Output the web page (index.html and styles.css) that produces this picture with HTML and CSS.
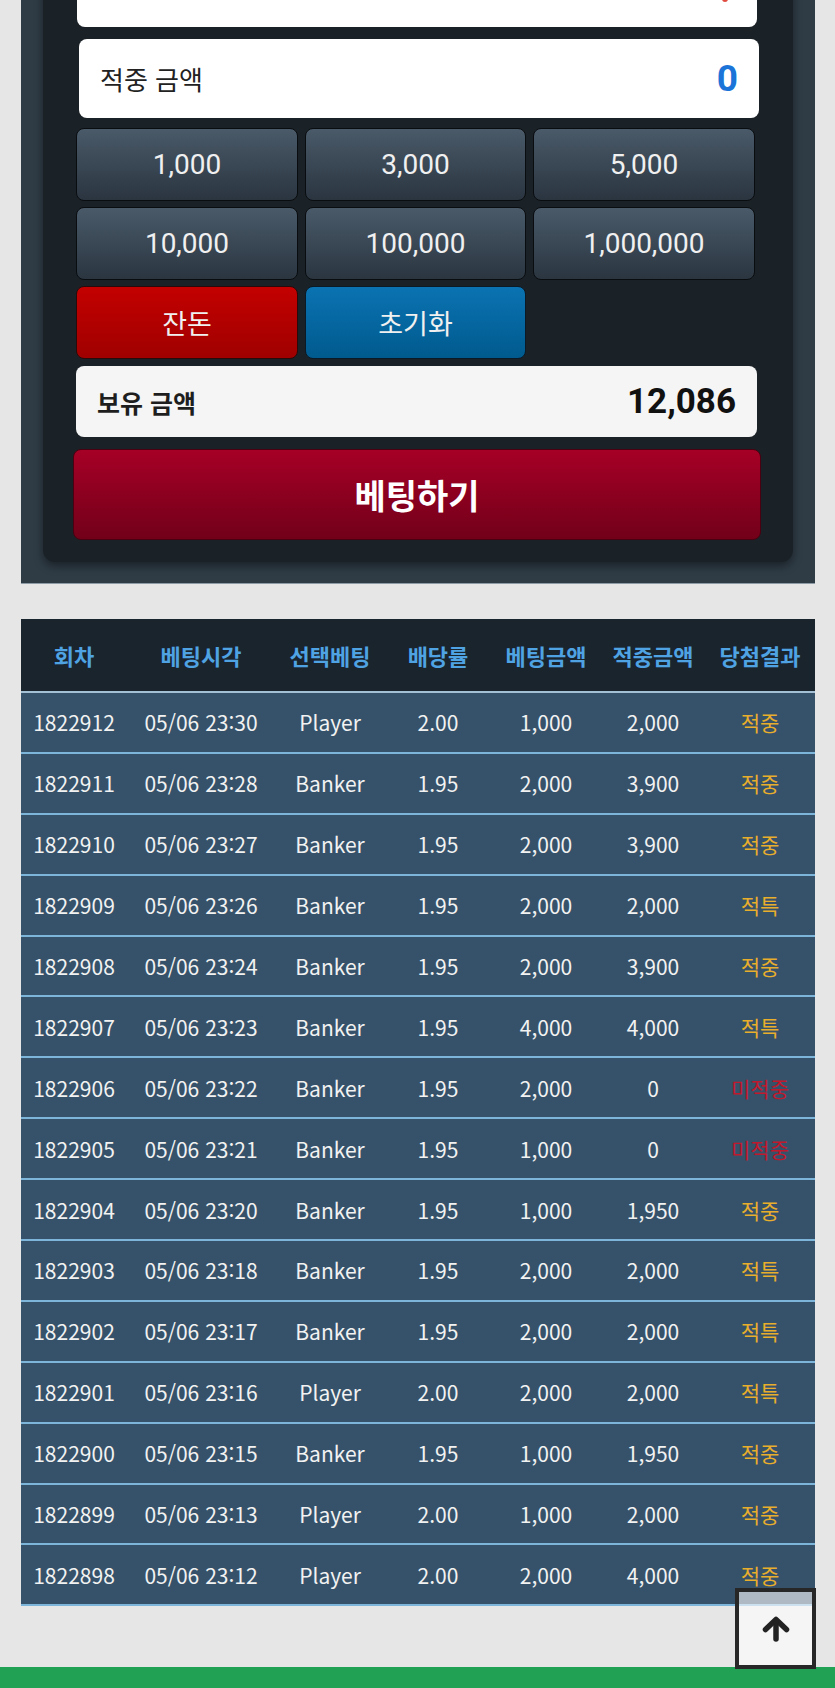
FILE: index.html
```html
<!DOCTYPE html>
<html lang="ko">
<head>
<meta charset="utf-8">
<title>베팅</title>
<link rel="stylesheet" href="styles.css">
</head>
<body>
<div class="page">
  <section class="outer">
    <div class="inner">
      <div class="field field-top"><span class="mark" aria-hidden="true"></span></div>
      <div class="field field-win"><span class="label">적중 금액</span><span class="value blue">0</span></div>
      <div class="chips">
        <button class="chip">1,000</button>
        <button class="chip">3,000</button>
        <button class="chip">5,000</button>
        <button class="chip">10,000</button>
        <button class="chip">100,000</button>
        <button class="chip">1,000,000</button>
        <button class="chip chip-red kr">잔돈</button>
        <button class="chip chip-blue kr">초기화</button>
      </div>
      <div class="field field-hold"><span class="label bold">보유 금액</span><span class="value dark">12,086</span></div>
      <button class="bet">베팅하기</button>
    </div>
  </section>

  <table class="history">
    <thead>
      <tr><th class="c1">회차</th><th class="c2">베팅시각</th><th class="c3">선택베팅</th><th class="c4">배당률</th><th class="c5">베팅금액</th><th class="c6">적중금액</th><th class="c7">당첨결과</th></tr>
    </thead>
    <tbody>
      <tr><td>1822912</td><td>05/06 23:30</td><td>Player</td><td>2.00</td><td>1,000</td><td>2,000</td><td class="win">적중</td></tr>
      <tr><td>1822911</td><td>05/06 23:28</td><td>Banker</td><td>1.95</td><td>2,000</td><td>3,900</td><td class="win">적중</td></tr>
      <tr><td>1822910</td><td>05/06 23:27</td><td>Banker</td><td>1.95</td><td>2,000</td><td>3,900</td><td class="win">적중</td></tr>
      <tr><td>1822909</td><td>05/06 23:26</td><td>Banker</td><td>1.95</td><td>2,000</td><td>2,000</td><td class="win">적특</td></tr>
      <tr><td>1822908</td><td>05/06 23:24</td><td>Banker</td><td>1.95</td><td>2,000</td><td>3,900</td><td class="win">적중</td></tr>
      <tr><td>1822907</td><td>05/06 23:23</td><td>Banker</td><td>1.95</td><td>4,000</td><td>4,000</td><td class="win">적특</td></tr>
      <tr><td>1822906</td><td>05/06 23:22</td><td>Banker</td><td>1.95</td><td>2,000</td><td>0</td><td class="lose">미적중</td></tr>
      <tr><td>1822905</td><td>05/06 23:21</td><td>Banker</td><td>1.95</td><td>1,000</td><td>0</td><td class="lose">미적중</td></tr>
      <tr><td>1822904</td><td>05/06 23:20</td><td>Banker</td><td>1.95</td><td>1,000</td><td>1,950</td><td class="win">적중</td></tr>
      <tr><td>1822903</td><td>05/06 23:18</td><td>Banker</td><td>1.95</td><td>2,000</td><td>2,000</td><td class="win">적특</td></tr>
      <tr><td>1822902</td><td>05/06 23:17</td><td>Banker</td><td>1.95</td><td>2,000</td><td>2,000</td><td class="win">적특</td></tr>
      <tr><td>1822901</td><td>05/06 23:16</td><td>Player</td><td>2.00</td><td>2,000</td><td>2,000</td><td class="win">적특</td></tr>
      <tr><td>1822900</td><td>05/06 23:15</td><td>Banker</td><td>1.95</td><td>1,000</td><td>1,950</td><td class="win">적중</td></tr>
      <tr><td>1822899</td><td>05/06 23:13</td><td>Player</td><td>2.00</td><td>1,000</td><td>2,000</td><td class="win">적중</td></tr>
      <tr><td>1822898</td><td>05/06 23:12</td><td>Player</td><td>2.00</td><td>2,000</td><td>4,000</td><td class="win">적중</td></tr>
    </tbody>
  </table>

  <footer class="footer"></footer>
</div>

<a class="to-top" href="#" aria-label="맨 위로">
  <svg width="28" height="26" viewBox="0 0 28 26" aria-hidden="true">
    <path d="M3.5 13.5 L14 3.5 L24.5 13.5" fill="none" stroke="#222" stroke-width="5.5" stroke-linecap="round" stroke-linejoin="round"/>
    <path d="M14 5 V23" fill="none" stroke="#222" stroke-width="5.5" stroke-linecap="round"/>
  </svg>
</a>
</body>
</html>
```

FILE: styles.css
```css
html, body {
  margin: 0;
  padding: 0;
}
body {
  background: #e6e6e6;
  font-family: "Noto Sans CJK KR", "Noto Sans", sans-serif;
  overflow: hidden;
}
.page {
  margin-top: -93px;
}

/* betting panel */
.outer {
  margin: 0 20px 0 21px;
  padding: 20px 22px 21px 22px;
  background: #2f3c46;
  border-bottom: 1px solid #8d9ba6;
}
.inner {
  background: #1b2227;
  border-radius: 0 0 12px 12px;
  padding: 20px 36px 22px 34px;
  display: flex;
  flex-direction: column;
  box-shadow: 0 4px 10px rgba(0, 0, 0, 0.45);
}
.field {
  display: flex;
  align-items: center;
  justify-content: space-between;
  padding: 0 21px;
  background: #ffffff;
  border-radius: 8px;
  box-sizing: border-box;
}
.field-top {
  height: 80px;
  align-items: flex-end;
  justify-content: flex-end;
}
.mark {
  width: 6px;
  height: 3px;
  margin: 0 8px 25px 0;
  background: #e04a40;
  border-radius: 0 0 3px 3px;
}
.field-win {
  height: 79px;
  margin: 12px -2px 0 2px;
}
.field-hold {
  height: 71px;
  margin: 7px 0 0 -1px;
  background: #f5f5f5;
}
.label {
  font-family: "Noto Sans CJK KR", sans-serif;
  font-size: 26px;
  color: #222;
}
.label.bold {
  font-weight: 700;
  font-size: 25px;
  color: #1e1e1e;
}
.value {
  font-family: Roboto, "Liberation Sans", sans-serif;
  font-weight: 700;
  font-size: 37px;
}
.value.blue { color: #1b74d8; }
.value.dark { color: #111; font-size: 35px; }

.chips {
  margin: 10px 0 0 -1px;
  display: grid;
  grid-template-columns: 222px 221px 222px;
  grid-auto-rows: 73px;
  column-gap: 7px;
  row-gap: 6px;
}
.chip {
  margin: 0;
  padding: 0;
  border: 1px solid #0a0d10;
  border-radius: 8px;
  background: linear-gradient(#4a5a69, #2a3540);
  color: #f0f0f0;
  font-family: Roboto, "Liberation Sans", sans-serif;
  font-size: 28px;
}
.chip.kr {
  font-family: "Noto Sans CJK KR", sans-serif;
  font-size: 27px;
}
.chip-red {
  background: linear-gradient(#c30000, #a00000);
  border-color: #2a0a0a;
}
.chip-blue {
  background: linear-gradient(#0b73b2, #005a8e);
  border-color: #0a1a26;
  font-size: 28px;
}
.bet {
  margin: 12px -4px 0 -4px;
  height: 91px;
  border: 1px solid #4a0010;
  border-radius: 8px;
  background: linear-gradient(#a60026, #720019);
  color: #ffffff;
  font-family: "Noto Sans CJK KR", sans-serif;
  font-weight: 700;
  font-size: 34px;
}

/* history table */
.history {
  margin: 35px 20px 0 21px;
  width: 794px;
  border-collapse: collapse;
  table-layout: fixed;
  font-family: "Noto Sans CJK KR", sans-serif;
}
.history th {
  height: 72px;
  padding: 0;
  background: #1a242d;
  color: #4fa3e3;
  font-size: 22px;
  font-weight: 700;
  border-bottom: 2px solid #a3c0d4;
}
.history td {
  height: 58.9px;
  padding: 0;
  text-align: center;
  background: #36526a;
  color: #f2f2f2;
  font-size: 21px;
  border-bottom: 2px solid #7db4da;
}
.c1 { width: 106px; }
.c2 { width: 148px; }
.c3 { width: 110px; }
.c4 { width: 106px; }
.c5 { width: 110px; }
.c6 { width: 104px; }
.c7 { width: 110px; }
.history td.win { color: #e8ae2c; }
.history td.lose { color: #c0182c; }

.footer {
  margin-top: 61px;
  height: 21px;
  background: #21a153;
}

/* scroll to top overlay */
.to-top {
  position: fixed;
  right: 19px;
  bottom: 19px;
  width: 81px;
  height: 81px;
  box-sizing: border-box;
  border: 4px solid #272727;
  background: rgba(255, 255, 255, 0.6);
  display: flex;
  align-items: center;
  justify-content: center;
}
```
